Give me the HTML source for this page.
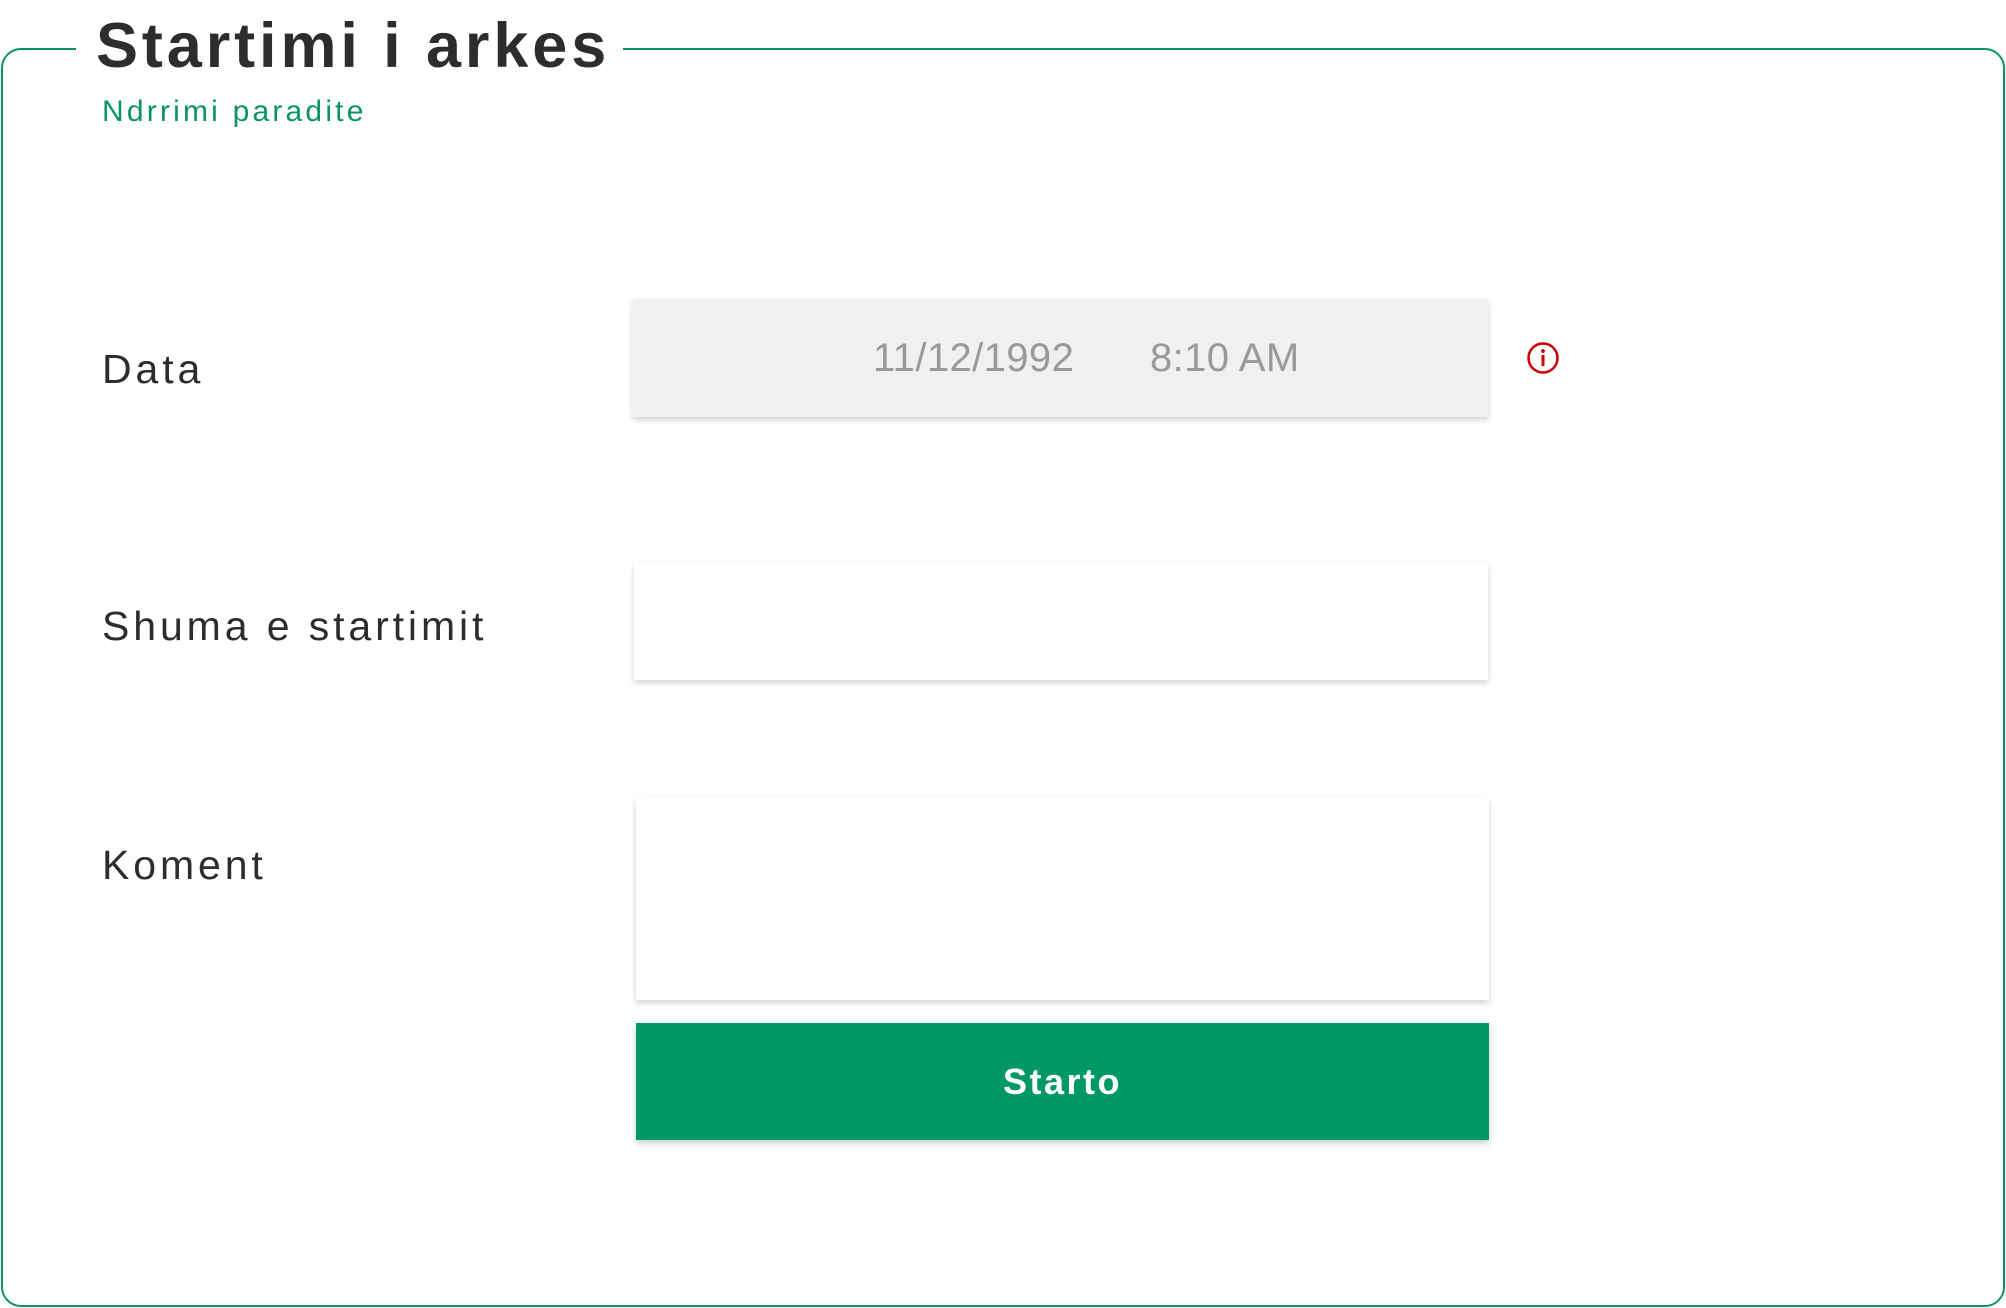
<!DOCTYPE html>
<html><head><meta charset="utf-8"><style>
html,body{margin:0;padding:0;background:#fff;}
body{width:2006px;height:1308px;position:relative;overflow:hidden;font-family:"Liberation Sans",sans-serif;}
.frame{position:absolute;left:1px;top:48px;width:2000px;height:1255px;border:2px solid #0a9464;border-radius:20px;}
.gap{position:absolute;left:76px;top:40px;width:547px;height:20px;background:#fff;}
.title{position:absolute;left:96px;top:6px;font-size:63px;font-weight:bold;color:#2d2d2d;letter-spacing:3.9px;line-height:80px;}
.sub{position:absolute;left:102px;top:92px;font-size:30px;color:#0a9464;letter-spacing:3.2px;line-height:40px;}
.lbl{position:absolute;left:102px;font-size:41px;color:#2d2d2d;letter-spacing:3.9px;line-height:50px;}
.box{position:absolute;box-shadow:0 3px 6px rgba(0,0,0,0.18);background:#fff;}
.dt{position:absolute;top:336px;font-size:40px;color:#999;line-height:44px;letter-spacing:0.4px;}
.btn{position:absolute;left:636px;top:1023px;width:853px;height:117px;background:#029863;box-shadow:0 3px 6px rgba(0,0,0,0.2);color:#fff;font-weight:bold;font-size:36px;letter-spacing:2.5px;text-align:center;line-height:117px;}
</style></head><body>
<div class="frame"></div>
<div class="gap"></div>
<div class="title">Startimi i arkes</div>
<div class="sub">Ndrrimi paradite</div>
<div class="lbl" style="top:344px">Data</div>
<div class="lbl" style="top:601px">Shuma e startimit</div>
<div class="lbl" style="top:840px">Koment</div>
<div class="box" style="left:633px;top:299px;width:855px;height:118px;background:#f0f0f0"></div>
<div class="dt" style="left:873px">11/12/1992</div>
<div class="dt" style="left:1150px">8:10 AM</div>
<svg style="position:absolute;left:1526px;top:341px" width="34" height="34" viewBox="0 0 34 34"><circle cx="17" cy="17" r="14.5" fill="none" stroke="#c00" stroke-width="2.5"/><rect x="15.5" y="14" width="3" height="11" fill="#c00"/><circle cx="17" cy="10" r="1.9" fill="#c00"/></svg>
<div class="box" style="left:634px;top:563px;width:854px;height:117px"></div>
<div class="box" style="left:636px;top:798px;width:853px;height:202px"></div>
<div class="btn">Starto</div>
</body></html>
